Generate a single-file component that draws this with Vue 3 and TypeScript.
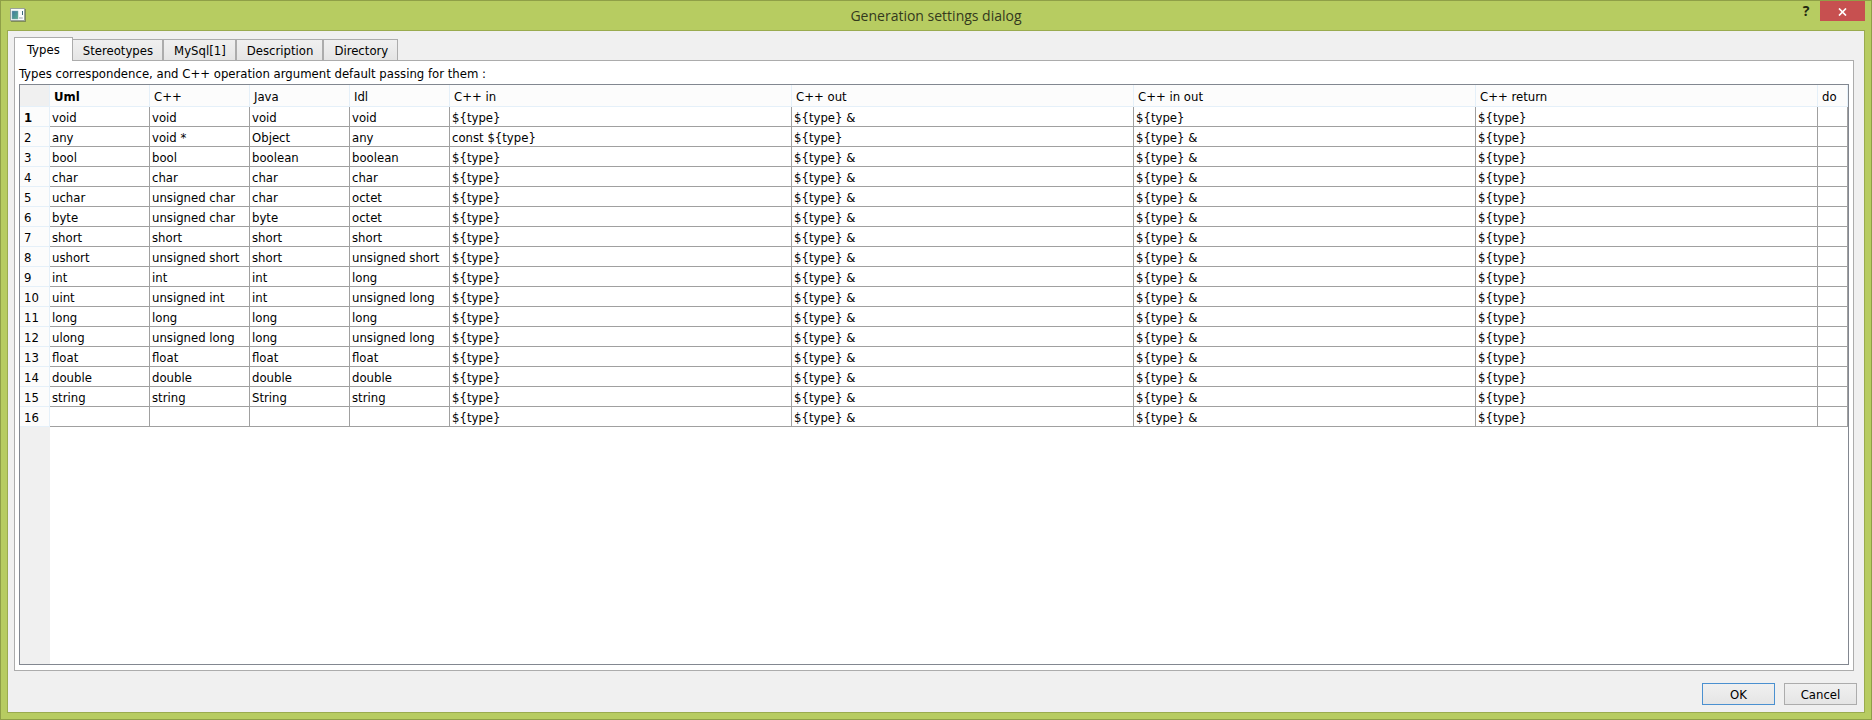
<script setup lang="ts">
import { ref } from 'vue'

interface Column {
  label: string
  kind: 'name' | 'wide' | 'small'
}

const tabs: string[] = ['Types', 'Stereotypes', 'MySql[1]', 'Description', 'Directory']
const activeTab = ref<string>('Types')

const columns: Column[] = [
  { label: 'Uml', kind: 'name' },
  { label: 'C++', kind: 'name' },
  { label: 'Java', kind: 'name' },
  { label: 'Idl', kind: 'name' },
  { label: 'C++ in', kind: 'wide' },
  { label: 'C++ out', kind: 'wide' },
  { label: 'C++ in out', kind: 'wide' },
  { label: 'C++ return', kind: 'wide' },
  { label: 'do', kind: 'small' },
]

const T = '${type}'
const R = '${type} &'

const names: string[][] = [
  ['void', 'void', 'void', 'void'],
  ['any', 'void *', 'Object', 'any'],
  ['bool', 'bool', 'boolean', 'boolean'],
  ['char', 'char', 'char', 'char'],
  ['uchar', 'unsigned char', 'char', 'octet'],
  ['byte', 'unsigned char', 'byte', 'octet'],
  ['short', 'short', 'short', 'short'],
  ['ushort', 'unsigned short', 'short', 'unsigned short'],
  ['int', 'int', 'int', 'long'],
  ['uint', 'unsigned int', 'int', 'unsigned long'],
  ['long', 'long', 'long', 'long'],
  ['ulong', 'unsigned long', 'long', 'unsigned long'],
  ['float', 'float', 'float', 'float'],
  ['double', 'double', 'double', 'double'],
  ['string', 'string', 'String', 'string'],
  ['', '', '', ''],
]

function passing(uml: string): string[] {
  if (uml === 'void') return [T, R, T, T]
  if (uml === 'any') return ['const ' + T, T, R, T]
  return [T, R, R, T]
}

const rows: string[][] = names.map((n) => [...n, ...passing(n[0]), ''])
</script>

<template>
  <div class="window">
    <header class="titlebar">
      <svg class="app-icon" width="16" height="14" viewBox="0 0 16 14" aria-hidden="true">
        <defs>
          <linearGradient id="pane" x1="0" y1="0" x2="1" y2="1">
            <stop offset="0" stop-color="#3f74a0" />
            <stop offset="1" stop-color="#57b08a" />
          </linearGradient>
        </defs>
        <rect x="0.5" y="0.5" width="14" height="12" fill="#fafcfc" stroke="#9aa39a" />
        <path d="M1 13.5H16M15.5 1V13" stroke="#7f8d55" />
        <rect x="2" y="3" width="6" height="8" fill="url(#pane)" stroke="#7fa6ae" stroke-width="0.5" />
        <rect x="9" y="9" width="3" height="2" fill="#c9cfd1" />
        <rect x="12" y="3" width="1" height="4" fill="#3d6b7c" />
        <rect x="12" y="9" width="1" height="2" fill="#d6dadb" />
      </svg>
      <h1 class="title">Generation settings dialog</h1>
      <div class="caption-buttons">
        <button class="help" type="button" aria-label="Help">?</button>
        <button class="close" type="button" aria-label="Close">
          <svg width="9" height="8" viewBox="0 0 9 8" aria-hidden="true">
            <path d="M1 0.5L8 7.5M8 0.5L1 7.5" stroke="#fff" stroke-width="1.7" />
          </svg>
        </button>
      </div>
    </header>

    <main class="client">
      <div class="tabs" role="tablist">
        <button
          v-for="tab in tabs"
          :key="tab"
          type="button"
          role="tab"
          class="tab"
          :class="{ active: tab === activeTab }"
          :aria-selected="tab === activeTab"
          @click="activeTab = tab"
        >{{ tab }}</button>
      </div>

      <section class="panel" role="tabpanel">
        <p id="caption" class="caption">Types correspondence, and C++ operation argument default passing for them :</p>
        <div class="frame">
          <table class="grid" aria-labelledby="caption">
            <colgroup>
              <col class="col-small" />
              <col v-for="c in columns" :key="c.label" :class="'col-' + c.kind" />
            </colgroup>
            <thead>
              <tr>
                <td class="corner"></td>
                <th v-for="(c, i) in columns" :key="c.label" scope="col" :class="{ current: i === 0 }">{{ c.label }}</th>
              </tr>
            </thead>
            <tbody>
              <tr v-for="(row, r) in rows" :key="r">
                <th scope="row" :class="{ current: r === 0 }">{{ r + 1 }}</th>
                <td v-for="(cell, c) in row" :key="c">{{ cell }}</td>
              </tr>
            </tbody>
          </table>
          <div class="gutter"></div>
        </div>
      </section>

      <footer class="actions">
        <button type="button" class="push default">OK</button>
        <button type="button" class="push">Cancel</button>
      </footer>
    </main>
  </div>
</template>

<style>
body {
  margin: 0;
}
</style>

<style scoped>
.window {
  box-sizing: border-box;
  min-height: 100vh;
  display: flex;
  flex-direction: column;
  padding: 0 6px 6px;
  border: 1px solid #8f9f47;
  background: #b7cc61;
  color: #000;
  font-family: "DejaVu Sans Condensed", "Noto Sans", sans-serif;
  font-size: 13px;
}

button {
  margin: 0;
  padding: 0;
  font: inherit;
  color: inherit;
}

.titlebar {
  height: 29px;
  display: grid;
  grid-template-columns: 1fr auto 1fr;
}

.app-icon {
  margin: 7px 0 0 3px;
}

.title {
  margin: 0;
  font-family: "Open Sans", "Noto Sans", sans-serif;
  font-size: 14px;
  font-weight: 400;
  line-height: 29px;
  color: #33391d;
}

.caption-buttons {
  display: flex;
  justify-content: flex-end;
  align-items: flex-start;
}

.help {
  width: 28px;
  height: 20px;
  border: 0;
  background: none;
  color: #23280f;
  font-family: "Open Sans", sans-serif;
  font-size: 14px;
  font-weight: 700;
  line-height: 20px;
}

.close {
  width: 45px;
  height: 20px;
  display: flex;
  align-items: center;
  justify-content: center;
  padding-top: 2px;
  border: 0;
  background: #c75050;
}

.client {
  flex: 1;
  display: flex;
  flex-direction: column;
  padding: 6px;
  border: 1px solid #9aab4f;
  background: #f0f0f0;
}

.tabs {
  display: flex;
  align-items: flex-end;
  height: 23px;
}

.tab {
  height: 21px;
  padding: 2px 9px 0 10px;
  border: 1px solid #acacac;
  border-bottom: 0;
  background: linear-gradient(#f0f0f0, #e5e5e5);
  line-height: 18px;
}

.tab.active {
  height: 24px;
  z-index: 1;
  margin-bottom: -1px;
  padding: 0 12px;
  background: #fff;
}

.tab.active + .tab {
  border-left: 0;
}

.panel {
  flex: 1;
  display: flex;
  flex-direction: column;
  margin-right: 4px;
  padding: 0 4px 5px;
  border: 1px solid #acacac;
  background: #fff;
}

.caption {
  margin: 0;
  padding-top: 2px;
  line-height: 21px;
}

.frame {
  flex: 1;
  display: flex;
  flex-direction: column;
  border: 1px solid #828790;
}

.grid {
  width: 100%;
  table-layout: fixed;
  border-collapse: separate;
  border-spacing: 0;
}

.col-small {
  width: 30px;
}

.col-name {
  width: 100px;
}

.grid th,
.grid td {
  box-sizing: border-box;
  height: 20px;
  padding: 2px 2px 0;
  border-right: 1px solid #a0a0a0;
  border-bottom: 1px solid #a0a0a0;
  line-height: 17px;
  text-align: left;
  white-space: nowrap;
}

.grid th {
  padding: 2px 4px 0;
  border-color: #e5f0f9;
  background: #fcfcfc;
  font-weight: 400;
}

.grid thead th,
.grid thead td {
  height: 22px;
  line-height: 19px;
}

.grid .corner {
  border-color: #e5f0f9;
  background: #f0f0f0;
}

.grid .current {
  font-weight: 700;
}

.gutter {
  flex: 1;
  width: 30px;
  background: #f0f0f0;
}

.actions {
  display: flex;
  justify-content: flex-end;
  gap: 9px;
  padding: 12px 1px 1px 0;
}

.push {
  width: 73px;
  height: 22px;
  padding-top: 2px;
  border: 1px solid #acacac;
  background: linear-gradient(#f0f0f0, #e5e5e5);
  line-height: 18px;
}

.push.default {
  border-color: #4a90d0;
}
</style>
